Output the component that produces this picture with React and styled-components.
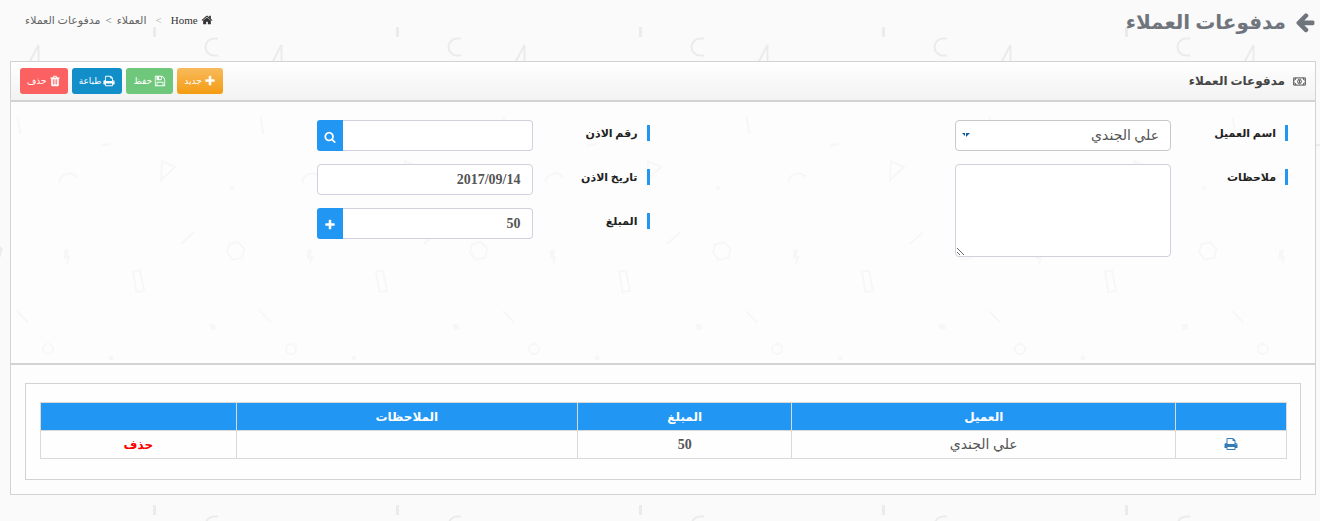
import styled, { createGlobalStyle } from 'styled-components';
import { useState } from 'react';

const shapes = `
  <rect x='153' y='27' width='3' height='10' fill='#ebebeb'/>
  <path d='M218 38.5h-4a8.5 8.5 0 0 0 0 17h4M28.5 64L38.5 45V64M17.5 117L20.5 134M101 145.5L110.5 144M59.5 183A9.5 9 0 0 1 76.5 177M162 161L175 167L161 180ZM181 244L194 232M133 271.5L140 270.5L144 291L136.5 292ZM17 311L28.5 323M229 244.5L238 242L244.5 249L242 258L232.5 260L227 252ZM-14 244.5L-5 242L1.5 249L-1 258L-10.5 260L-16 252Z' fill='none' stroke='#ebebeb' stroke-width='2'/>
  <path d='M229 187L235.5 186L232 191ZM64 250L69 249L68 256L70.5 256L66.5 267L67 259L64 259ZM209 324L215 324L217 329L211 330Z' fill='#ebebeb'/>
  <circle cx='48' cy='349' r='5' fill='none' stroke='#ebebeb' stroke-width='2'/>
  <circle cx='111' cy='358' r='2.5' fill='#ebebeb'/>
`;

const patternUrl = `data:image/svg+xml,${encodeURIComponent(
  `<svg xmlns='http://www.w3.org/2000/svg' width='243' height='478'>${shapes}</svg>`
)}`;

const arrowUrl = `data:image/svg+xml,${encodeURIComponent(
  "<svg xmlns='http://www.w3.org/2000/svg' width='8' height='5'><path d='M0 0h3v3zM4 0h4l-4 4z' fill='#0a5fa8'/></svg>"
)}`;

const GlobalStyle = createGlobalStyle`
  * {
    box-sizing: border-box;
  }

  body {
    margin: 0;
    background: #fafafa url("${patternUrl}");
    color: #555;
    font-family: 'Liberation Serif', 'DejaVu Sans', sans-serif;
    font-size: 14px;
  }

  button, input, select, textarea {
    font-family: inherit;
  }
`;

const Page = styled.main`
  padding: 0 4px 24px 10px;
`;

const TopBar = styled.header`
  display: flex;
  justify-content: space-between;
  height: 61px;
`;

const PageTitle = styled.h1`
  display: flex;
  align-items: center;
  gap: 8px;
  height: 44px;
  margin: 0;
  color: #70757d;
  font-size: 20px;
  font-weight: 700;
`;

const BackLink = styled.a`
  display: flex;
  color: inherit;
`;

const Breadcrumb = styled.nav`
  display: flex;
  align-items: center;
  gap: 9px;
  height: 40px;
  padding-left: 15px;
  color: #666;
  font-size: 11px;

  a {
    display: flex;
    align-items: center;
    gap: 3px;
    color: #333;
    text-decoration: none;
  }

  .separator {
    color: #aaa;
  }
`;

const Trail = styled.div`
  display: flex;
  gap: 5px;
`;

const Panel = styled.section`
  border: 1px solid #d3d3d3;
  background: rgba(255, 255, 255, 0.6);
`;

const PanelHeader = styled.div`
  display: flex;
  align-items: center;
  justify-content: space-between;
  height: 40px;
  padding: 0 9px;
  border-bottom: 2px solid #d3d3d3;
  background: linear-gradient(#fff, #f2f2f2);
`;

const PanelTitle = styled.h2`
  display: flex;
  align-items: center;
  gap: 8px;
  margin: 0;
  color: #444;
  font-size: 12px;
  font-weight: 700;
`;

const Toolbar = styled.div`
  display: flex;
  gap: 4px;
`;

const ToolButton = styled.button`
  display: flex;
  align-items: center;
  justify-content: center;
  gap: 2px;
  min-width: 46px;
  height: 26px;
  padding: 0 7px;
  border: 0;
  border-radius: 3px;
  background: ${(props) => props.$background};
  color: #fff;
  font-size: 9px;
  cursor: pointer;
`;

const Form = styled.form`
  display: grid;
  grid-template-columns: 1fr 1fr;
  min-height: 263px;
  padding: 18px 27px 18px 0;
  border-bottom: 2px solid #d3d3d3;
`;

const Column = styled.div`
  display: flex;
  flex-direction: column;
  gap: 13px;
`;

const Field = styled.div`
  display: flex;
  align-items: flex-start;
`;

const Label = styled.label`
  width: 117px;
  height: 16px;
  margin-top: 5px;
  padding-right: 9px;
  border-right: 3px solid #2196f3;
  color: #222;
  font-size: 11px;
  font-weight: 700;
  line-height: 16px;
`;

const Control = styled.div`
  display: flex;
  width: 216px;

  input, select, textarea {
    flex: 1;
    min-width: 0;
    height: 31px;
    padding: 0 11px;
    border: 1px solid #d0d0de;
    border-radius: 4px;
    outline: none;
    background: #fff;
    color: #555;
    font-size: 14px;
    font-weight: 700;
  }

  select {
    appearance: none;
    border-color: #c8c8c8;
    background: #fff url("${arrowUrl}") no-repeat 6px 12px;
    font-weight: 400;
  }

  textarea {
    height: 93px;
    padding: 6px 11px;
  }

  input:not(:last-child) {
    border-left: 0;
    border-radius: 0 4px 4px 0;
  }
`;

const AddonButton = styled.button`
  display: flex;
  align-items: center;
  justify-content: center;
  width: 26px;
  height: 31px;
  padding: 2px 0 0;
  border: 0;
  border-radius: 3px 0 0 3px;
  background: #2196f3;
  color: #fff;
  cursor: pointer;
`;

const TableArea = styled.div`
  padding: 18px 14px 14px;
`;

const TableBox = styled.div`
  padding: 18px 13px 20px 14px;
  border: 1px solid #d3d3d3;
  background: rgba(255, 255, 255, 0.6);
`;

const Table = styled.table`
  width: 100%;
  border-collapse: collapse;
  table-layout: fixed;

  th, td {
    height: 28px;
    padding: 0;
    border: 1px solid #d9d9d9;
    text-align: center;
    vertical-align: middle;
    font-size: 14px;
    line-height: 20px;
  }

  th {
    background: #2196f3;
    color: #fff;
    font-size: 12px;
  }

  .amount {
    font-weight: 700;
  }
`;

const Col = styled.col`
  width: ${(props) => props.$width};
`;

const RowLink = styled.a`
  color: ${(props) => (props.$danger ? '#f00' : '#337ab7')};
  font-size: 12px;
  font-weight: 700;
  text-decoration: none;

  svg {
    vertical-align: -2px;
  }
`;

const icons = {
  arrow:
    'M1664 896v128q0 53-32.5 90.5t-84.5 37.5h-704l293 294q38 36 38 90t-38 90l-75 76q-37 37-90 37-52 0-91-37l-651-652q-37-37-37-90 0-52 37-91l651-650q38-38 91-38 52 0 90 38l75 74q38 38 38 91t-38 91l-293 293h704q52 0 84.5 37.5t32.5 90.5z',
  home: 'M1472 992v480q0 26-19 45t-45 19h-384v-384h-256v384h-384q-26 0-45-19t-19-45v-480q0-1 .5-3t.5-3l575-474 575 474q1 2 1 6zm223-69l-62 74q-8 9-21 11h-3q-13 0-21-7l-692-577-692 577q-12 8-24 7-13-2-21-11l-62-74q-8-10-7-23.5t11-21.5l719-599q32-26 76-26t76 26l244 204v-195q0-14 9-23t23-9h192q14 0 23 9t9 23v408l219 182q10 8 11 21.5t-7 23.5z',
  plus: 'M1600 736v192q0 40-28 68t-68 28h-416v416q0 40-28 68t-68 28h-192q-40 0-68-28t-28-68v-416h-416q-40 0-68-28t-28-68v-192q0-40 28-68t68-28h416v-416q0-40 28-68t68-28h192q40 0 68 28t28 68v416h416q40 0 68 28t28 68z',
  save: 'M512 1536h768v-384h-768v384zm896 0h128v-896q0-14-10-38.5t-20-34.5l-281-281q-10-10-34-20t-39-10v416q0 40-28 68t-68 28h-576q-40 0-68-28t-28-68v-416h-128v1280h128v-416q0-40 28-68t68-28h832q40 0 68 28t28 68v416zm-384-928v-320q0-13-9.5-22.5t-22.5-9.5h-192q-13 0-22.5 9.5t-9.5 22.5v320q0 13 9.5 22.5t22.5 9.5h192q13 0 22.5-9.5t9.5-22.5zm640 32v928q0 40-28 68t-68 28h-1344q-40 0-68-28t-28-68v-1344q0-40 28-68t68-28h928q40 0 88 20t76 48l280 280q28 28 48 76t20 88z',
  print:
    'M448 1536h896v-256h-896v256zm0-640h896v-384h-160q-40 0-68-28t-28-68v-160h-640v640zm1152 64q0-26-19-45t-45-19-45 19-19 45 19 45 45 19 45-19 19-45zm128 0v416q0 13-9.5 22.5t-22.5 9.5h-224v160q0 40-28 68t-68 28h-960q-40 0-68-28t-28-68v-160h-224q-13 0-22.5-9.5t-9.5-22.5v-416q0-79 56.5-135.5t135.5-56.5h64v-544q0-40 28-68t68-28h672q40 0 88 20t76 48l152 152q28 28 48 76t20 88v256h64q79 0 135.5 56.5t56.5 135.5z',
  trash:
    'M704 1376v-704q0-14-9-23t-23-9h-64q-14 0-23 9t-9 23v704q0 14 9 23t23 9h64q14 0 23-9t9-23zm256 0v-704q0-14-9-23t-23-9h-64q-14 0-23 9t-9 23v704q0 14 9 23t23 9h64q14 0 23-9t9-23zm256 0v-704q0-14-9-23t-23-9h-64q-14 0-23 9t-9 23v704q0 14 9 23t23 9h64q14 0 23-9t9-23zm-544-992h448l-48-117q-7-9-17-11h-317q-10 2-17 11zm928 32v64q0 14-9 23t-23 9h-96v948q0 83-47 143.5t-113 60.5h-832q-66 0-113-58.5t-47-141.5v-952h-96q-14 0-23-9t-9-23v-64q0-14 9-23t23-9h309l70-167q15-37 54-63t79-26h320q40 0 79 26t54 63l70 167h309q14 0 23 9t9 23z',
  search:
    'M1216 832q0-185-131.5-316.5t-316.5-131.5-316.5 131.5-131.5 316.5 131.5 316.5 316.5 131.5 316.5-131.5 131.5-316.5zm512 832q0 52-38 90t-90 38q-54 0-90-38l-343-342q-179 124-399 124-143 0-273.5-55.5t-225-150-150-225-55.5-273.5 55.5-273.5 150-225 225-150 273.5-55.5 273.5 55.5 225 150 150 225 55.5 273.5q0 220-124 399l343 343q37 37 37 90z',
};

function Icon({ name, size = 12 }) {
  return (
    <svg width={size} height={size} viewBox="0 0 1792 1792" fill="currentColor" aria-hidden="true">
      <path d={icons[name]} />
    </svg>
  );
}

function MoneyIcon() {
  return (
    <svg width="13" height="9" viewBox="0 0 14 10" fill="none" stroke="currentColor" aria-hidden="true">
      <path d="M.5 1h13v8H.5z" />
      <path d="M1 3.5Q3 3.5 3 1M11 1Q11 3.5 13 3.5M1 6.5Q3 6.5 3 9M11 9Q11 6.5 13 6.5" />
      <ellipse cx="7" cy="5" rx="2" ry="2.5" />
      <path d="M7 3.5v3" />
    </svg>
  );
}

const tools = [
  { icon: 'plus', text: 'جديد', background: 'linear-gradient(#f9ba5d, #f39c12)' },
  { icon: 'save', text: 'حفظ', background: '#6fc77c' },
  { icon: 'print', text: 'طباعة', background: '#128ec9' },
  { icon: 'trash', text: 'حذف', background: '#fb6161' },
];

const payments = [{ id: 1, customer: 'علي الجندي', amount: 50, notes: '' }];

export default function App() {
  const [customer, setCustomer] = useState('علي الجندي');
  const [notes, setNotes] = useState('');
  const [receiptNo, setReceiptNo] = useState('');
  const [date, setDate] = useState('2017/09/14');
  const [amount, setAmount] = useState('50');

  return (
    <>
      <GlobalStyle />
      <Page dir="rtl" lang="ar">
        <TopBar>
          <PageTitle>
            <BackLink href="#back" aria-label="رجوع">
              <Icon name="arrow" size={22} />
            </BackLink>
            مدفوعات العملاء
          </PageTitle>
          <Breadcrumb>
            <a href="#home">
              <Icon name="home" />
              Home
            </a>
            <span className="separator">&gt;</span>
            <Trail>
              <span>العملاء</span>
              <span>&gt;</span>
              <span>مدفوعات العملاء</span>
            </Trail>
          </Breadcrumb>
        </TopBar>

        <Panel>
          <PanelHeader>
            <PanelTitle>
              <MoneyIcon />
              مدفوعات العملاء
            </PanelTitle>
            <Toolbar>
              {tools.map((tool) => (
                <ToolButton key={tool.icon} type="button" $background={tool.background}>
                  <Icon name={tool.icon} />
                  {tool.text}
                </ToolButton>
              ))}
            </Toolbar>
          </PanelHeader>

          <Form onSubmit={(event) => event.preventDefault()}>
            <Column>
              <Field>
                <Label htmlFor="customer">اسم العميل</Label>
                <Control>
                  <select
                    id="customer"
                    value={customer}
                    onChange={(event) => setCustomer(event.target.value)}
                  >
                    <option>علي الجندي</option>
                  </select>
                </Control>
              </Field>
              <Field>
                <Label htmlFor="notes">ملاحظات</Label>
                <Control>
                  <textarea
                    id="notes"
                    value={notes}
                    onChange={(event) => setNotes(event.target.value)}
                  />
                </Control>
              </Field>
            </Column>
            <Column>
              <Field>
                <Label htmlFor="receipt">رقم الاذن</Label>
                <Control>
                  <input
                    id="receipt"
                    type="text"
                    value={receiptNo}
                    onChange={(event) => setReceiptNo(event.target.value)}
                  />
                  <AddonButton type="button" aria-label="بحث">
                    <Icon name="search" />
                  </AddonButton>
                </Control>
              </Field>
              <Field>
                <Label htmlFor="date">تاريخ الاذن</Label>
                <Control>
                  <input
                    id="date"
                    type="text"
                    value={date}
                    onChange={(event) => setDate(event.target.value)}
                  />
                </Control>
              </Field>
              <Field>
                <Label htmlFor="amount">المبلغ</Label>
                <Control>
                  <input
                    id="amount"
                    type="text"
                    value={amount}
                    onChange={(event) => setAmount(event.target.value)}
                  />
                  <AddonButton type="button" aria-label="اضافة">
                    <Icon name="plus" />
                  </AddonButton>
                </Control>
              </Field>
            </Column>
          </Form>

          <TableArea>
            <TableBox>
              <Table>
                <colgroup>
                  <Col $width="8.9%" />
                  <Col $width="30.8%" />
                  <Col $width="17.2%" />
                  <Col $width="27.4%" />
                  <Col $width="15.7%" />
                </colgroup>
                <thead>
                  <tr>
                    <th aria-label="طباعة" />
                    <th>العميل</th>
                    <th>المبلغ</th>
                    <th>الملاحظات</th>
                    <th aria-label="حذف" />
                  </tr>
                </thead>
                <tbody>
                  {payments.map((payment) => (
                    <tr key={payment.id}>
                      <td>
                        <RowLink href="#print" aria-label="طباعة">
                          <Icon name="print" size={14} />
                        </RowLink>
                      </td>
                      <td>{payment.customer}</td>
                      <td className="amount">{payment.amount}</td>
                      <td>{payment.notes}</td>
                      <td>
                        <RowLink href="#delete" $danger>
                          حذف
                        </RowLink>
                      </td>
                    </tr>
                  ))}
                </tbody>
              </Table>
            </TableBox>
          </TableArea>
        </Panel>
      </Page>
    </>
  );
}
